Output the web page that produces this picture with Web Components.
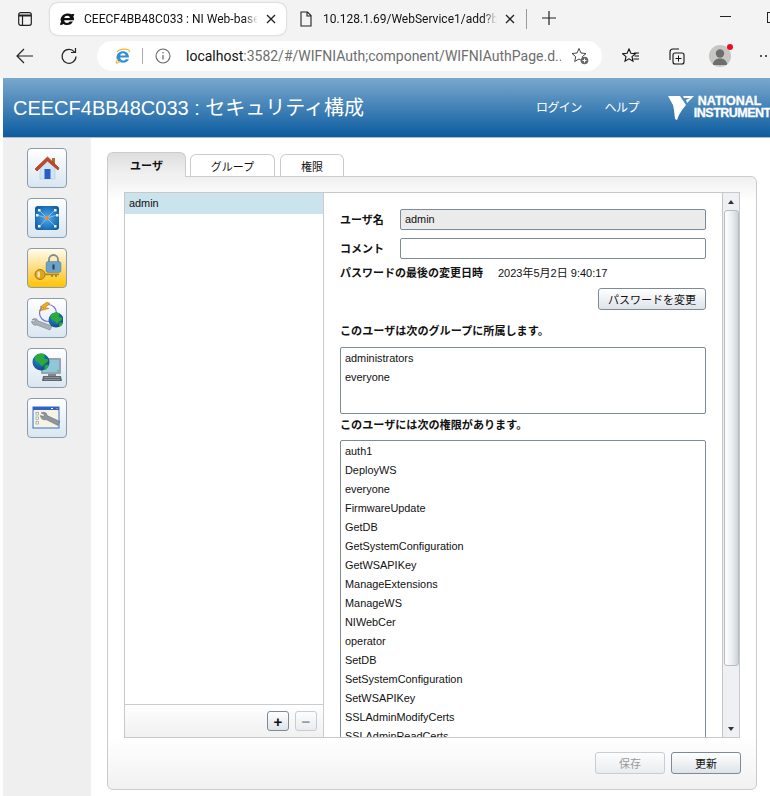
<!DOCTYPE html>
<html lang="ja">
<head>
<meta charset="utf-8">
<title>セキュリティ構成</title>
<style>
  html, body { margin: 0; padding: 0; height: 796px; overflow: hidden; background: #fff; }
  body { font-family: "Liberation Sans", "Noto Sans CJK JP", sans-serif; }
  app-page { display: block; }
</style>
</head>
<body>
<app-page></app-page>
<script>
// globe drawn at cx,cy with radius r, shared by two of the nav icons
const globe = (id, cx, cy, r) => `
  <defs><radialGradient id="${id}" cx=".4" cy=".35" r=".75"><stop offset="0" stop-color="#2f8fd0"/><stop offset="1" stop-color="#0a3f80"/></radialGradient></defs>
  <g transform="translate(${cx} ${cy}) scale(${r / 8})">
    <circle r="8" fill="url(#${id})"/>
    <path d="M-5-6c2-2 6-2.500 8-1.500 1.500 1-.5 2.500 0 4 1 1.500 3 0 3.500 1.500.5 2-2 2.500-3.500 4-1 1.500-2.500 2.500-3.500.5-.5-2-3-2.500-4.500-3.500-1-1.500-1-3.500 0-5z" fill="#2bab3a"/>
    <path d="M4 3c1.500-.5 3-.5 3.500 0-.5 2-2 3.500-3.500 4.500-1 0-1-3 0-4.500z" fill="#2bab3a"/>
  </g>`;

const ICONS = {
  home: `<svg width="30" height="30" viewBox="0 0 30 30"><path d="M8 13v13h15V13l-7.500-6z" fill="#cfe4f6" stroke="#a9c6de" stroke-width=".6"/><rect x="12.500" y="16" width="6" height="10" fill="#2a5cc0"/><rect x="20" y="5" width="3" height="6" fill="#a9712f"/><path d="M3 16 15.500 4 27 15l-1 2-10.500-9L5 18z" fill="#c04a26" stroke="#a83c1e" stroke-width=".8"/></svg>`,
  net: `<svg width="30" height="30" viewBox="0 0 30 30"><defs><radialGradient id="n" cx=".5" cy=".5" r=".7"><stop offset="0" stop-color="#58ace6"/><stop offset=".6" stop-color="#1f78c0"/><stop offset="1" stop-color="#0d4f8e"/></radialGradient></defs><rect x="3" y="3" width="24" height="24" rx="3" fill="url(#n)"/><path d="M7 7 15 15M23 7 15 15M8 23 15 15M23 23 15 15M5 12 15 15M25 12 15 15" stroke="#d8e9f6" stroke-width=".5"/><g fill="#eaf3fa"><rect x="4" y="11" width="2.500" height="2.500"/><rect x="24" y="11" width="2.500" height="2.500"/><rect x="6" y="6" width="2.500" height="2.500"/><rect x="22" y="6" width="2.500" height="2.500"/><rect x="6" y="22" width="2.500" height="2.500"/><rect x="22" y="22" width="2.500" height="2.500"/></g><circle cx="15" cy="15" r="2" fill="#f08a2c"/></svg>`,
  key: `<svg width="30" height="30" viewBox="0 0 30 30"><path d="M17 9V6.500a4.500 4.500 0 0 1 9 0V9" fill="none" stroke="#7f8a96" stroke-width="1.800"/><rect x="14" y="8.500" width="15" height="11" rx="2" fill="#6ba2c8" stroke="#4d7fa4" stroke-width=".5"/><rect x="20.500" y="11.500" width="2" height="5" fill="#24405c"/><circle cx="8" cy="21.500" r="5" fill="#e0a51e" stroke="#a87a10"/><rect x="5.500" y="18.500" width="2.500" height="6" rx="1" fill="#f3e6b8"/><path d="M13 20.500h14v1.800h-2v1.700h-2v-1.700h-2v1.700h-2v-1.700h-6z" fill="#b58810"/></svg>`,
  wrench: `<svg width="32" height="32" viewBox="0 0 32 32"><circle cx="17" cy="11" r="8.500" fill="none" stroke="#7474c4" stroke-width="1.200"/><path d="M16 0 9 5l4 1-5 3 10-2.500-4-1 5-4z" fill="#f2aa18" stroke="#a8720e" stroke-width=".5"/><path d="M1 18c2-2 5-2 6 1l14 5-2 4-13-5c-3 1-5-1-5.500-3.500l3 .5 1-2z" fill="#a9b0b8" stroke="#6a737c" stroke-width=".5"/>${globe('g1', 25, 18, 7.500)}</svg>`,
  monitor: `<svg width="32" height="32" viewBox="0 0 32 32"><rect x="10" y="6" width="20" height="16" rx="1" fill="#9aa3ab"/><rect x="12" y="8" width="16" height="12" fill="#8fc6dc"/><rect x="26" y="18" width="2" height="1.500" fill="#3dd060"/><rect x="17" y="22" width="8" height="2" fill="#80878e"/><path d="M12 24h18l1 5H11z" fill="#5f666d"/><path d="M13 25.500h16M13 27.500h16" stroke="#a8aeb4" stroke-width=".6"/>${globe('g2', 10, 10, 8.500)}</svg>`,
  window: `<svg width="32" height="32" viewBox="0 0 32 32"><rect x="2" y="5" width="26" height="21" fill="#f6f3e4" stroke="#3a6dc4"/><rect x="2" y="5" width="26" height="3" fill="#2f62c8"/><rect x="20" y="6" width="2" height="1" fill="#fff"/><rect x="25" y="6" width="2" height="1" fill="#f07828"/><g fill="#fff" stroke="#8a9a9a" stroke-width=".7"><rect x="5" y="10.500" width="2.500" height="2.500"/><rect x="5" y="15" width="2.500" height="2.500"/><rect x="5" y="19.500" width="2.500" height="2.500"/></g><path d="M10 11c3-1.500 6-.5 6 2.500l13 6-2 4-12-6c-3 1-5.500-1-5.500-4l3 1 1-2z" fill="#8e959c" stroke="#5c646c" stroke-width=".5"/></svg>`
};

class BrowserBar extends HTMLElement {
  constructor() {
    super();
    this.attachShadow({mode: 'open'}).innerHTML = `
    <style>
      :host { display: block; height: 78px; background: #f3f3f3; color: #111; overflow: hidden;
        font: 12px Roboto, "Noto Sans", "Noto Sans CJK JP", sans-serif; }
      svg { display: block; flex: none; }
      .tabs { height: 37px; display: flex; align-items: flex-start; }
      .panel { width: 50px; height: 37px; flex: none; display: flex; align-items: center; justify-content: center; box-sizing: border-box; padding-left: 0; }
      .tab { display: flex; align-items: center; flex: none; height: 32px; margin-top: 3px; box-sizing: border-box; white-space: nowrap; }
      .tab.on { width: 236px; background: #fff; border-radius: 8px; box-shadow: 0 0 2px #0000004d; padding-left: 9px; }
      .tab.off { width: 236px; padding-left: 14px; }
      .name { overflow: hidden; width: 174px; -webkit-mask-image: linear-gradient(90deg, #000 92%, transparent); mask-image: linear-gradient(90deg, #000 92%, transparent); }
      .on .name { margin-left: 9px; }
      .off .name { margin-left: 11px; }
      .x { margin-left: 8px; }
      .sep { width: 1px; height: 20px; flex: none; background: #9a9a9a; margin: 9px 15px 0 4px; }
      .plus { margin-top: 11px; }
      .min { margin: 16px 0 0 164px; width: 11px; height: 1px; flex: none; background: #222; }
      .max { margin: 12px 0 0 36px; width: 10px; height: 9px; flex: none; border: 1px solid #222; }
      .tools { height: 38px; display: flex; align-items: center; }
      .nav { width: 97px; flex: none; display: flex; align-items: center; padding-left: 16px; gap: 26px; box-sizing: border-box; }
      .addr { width: 505px; flex: none; height: 30px; background: #fff; border-radius: 15px; display: flex; align-items: center; padding-left: 18px; box-sizing: border-box; font-size: 14px; white-space: nowrap; }
      .bar { width: 1px; height: 16px; flex: none; background: #aaa; margin: 0 12px 0 11px; }
      .url { margin-left: 15px; width: 375px; flex: none; overflow: hidden; color: #6e6e6e; }
      .url b { font-weight: 400; color: #111; }
      .star { margin-left: 10px; }
      .right { display: flex; align-items: center; margin-left: 20px; }
      .avatar { width: 22px; height: 22px; border-radius: 50%; background: #c8c6c4; overflow: hidden; }
      .wrap { position: relative; margin-left: 24px; }
      .dot { position: absolute; right: -2px; top: -1px; width: 6px; height: 6px; border-radius: 50%; background: #e81123; }
      .dots { margin-left: 29px; display: flex; gap: 3px; }
      .dots i { width: 2px; height: 2px; background: #222; border-radius: 50%; }
    </style>
    <div class="tabs">
      <div class="panel"><svg width="14" height="14" viewBox="0 0 14 14"><rect x=".7" y=".7" width="12.6" height="12.6" rx="2" fill="none" stroke="#222" stroke-width="1.2"/><path d="M1 3.5h12" stroke="#222" stroke-width="2"/><path d="M4.5 3.5v9.5" stroke="#222" stroke-width="1.2"/></svg></div>
      <div class="tab on">
        <svg width="16" height="16" viewBox="0 0 16 16"><path d="M1.5 9.5C1.5 5 5 2.4 9 2.4c1.5 0 2.7.3 3.600.9 1-.4 2-.5 2.400-.2.400.3.100 1.400-.7 2.500.6 1 .8 2.200.7 3.600H5.200c.1 1.800 1.300 2.700 2.900 2.700 1.200 0 2.100-.5 2.600-1.400h3.200c-.9 2.400-3 3.600-5.800 3.600-1.500 0-2.800-.4-3.700-1.100-1.300 1-2.600 1.300-3 .9-.5-.5-.1-1.800.7-3.200-.2-.6-.3-1.100-.4-1.700zM5.300 7h5.600c-.1-1.500-1.200-2.300-2.700-2.300S5.500 5.500 5.300 7z" fill="#111"/></svg>
        <div class="name">CEECF4BB48C033 : NI Web-based Configuration</div>
        <svg class="x" width="10" height="10" viewBox="0 0 10 10"><path d="M1 1l8 8M9 1l-8 8" stroke="#222" stroke-width="1.300"/></svg>
      </div>
      <div class="tab off">
        <svg width="12" height="16" viewBox="0 0 12 16"><path d="M1 1h6.500L11 4.500V15H1zM7 1v4h4" fill="none" stroke="#222" stroke-width="1.100"/></svg>
        <div class="name">10.128.1.69/WebService1/add?b=1</div>
        <svg class="x" width="10" height="10" viewBox="0 0 10 10"><path d="M1 1l8 8M9 1l-8 8" stroke="#222" stroke-width="1.300"/></svg>
      </div>
      <div class="sep"></div>
      <svg class="plus" width="14" height="14" viewBox="0 0 14 14"><path d="M7 0v14M0 7h14" stroke="#222" stroke-width="1.200"/></svg>
      <div class="min"></div>
      <div class="max"></div>
    </div>
    <div class="tools">
      <div class="nav">
        <svg width="18" height="16" viewBox="0 0 18 16"><path d="M8 1 1 8l7 7M1 8h16" fill="none" stroke="#222" stroke-width="1.200"/></svg>
        <svg width="18" height="18" viewBox="0 0 18 18"><path d="M14.500 5A7 7 0 1 0 16 9.500M15.500 1v4.500H11" fill="none" stroke="#222" stroke-width="1.200"/></svg>
      </div>
      <div class="addr">
        <svg width="16" height="16" viewBox="0 0 16 16"><path d="M2 3.800C4 1.200 9 .5 13 1.500c1.500.5 1.800 1.500.7 3" fill="none" stroke="#f0b429" stroke-width="1.200"/><path d="M1.500 9.500C1.500 5.500 4.500 3.200 8 3.200c3.500 0 6 2.300 6 6.300H5.200c.2 2 1.400 3 3 3 1.200 0 2-.5 2.500-1.300h3.200c-.9 2.300-3 3.500-5.700 3.500-3.600 0-6.700-2-6.700-5.200zM5.300 7.600h5.200C10.400 6 9.400 5.200 8 5.200S5.500 6 5.300 7.600z" fill="#2f8fd8"/><path d="M3 11c-1.500 2-2.200 3.600-1.500 4 .7.400 2.300-.5 3.800-1.800" fill="none" stroke="#f0b429" stroke-width="1.100"/></svg>
        <div class="bar"></div>
        <svg width="16" height="16" viewBox="0 0 16 16"><circle cx="8" cy="8" r="7" fill="none" stroke="#666" stroke-width="1.100"/><path d="M8 7v4.500" stroke="#666" stroke-width="1.200"/><circle cx="8" cy="4.800" r=".8" fill="#666"/></svg>
        <div class="url"><b>localhost</b>:3582/#/WIFNIAuth;component/WIFNIAuthPage.d...</div>
        <svg class="star" width="18" height="18" viewBox="0 0 18 18"><path d="M8 1.500l2 4.500 5 .5-3.700 3.200 1 4.800L8 12l-4.300 2.500 1-4.800L1 6.500 6 6z" fill="none" stroke="#444" stroke-width="1"/><circle cx="13.500" cy="13.500" r="3.800" fill="#666"/><path d="M13.500 11.500v4M11.500 13.500h4" stroke="#fff"/></svg>
      </div>
      <div class="right">
        <svg width="18" height="16" viewBox="0 0 18 16"><path d="M7 1l1.900 4.300 4.600.4-3.500 3 1 4.500L7 10.800 3 13.200l1-4.500-3.500-3 4.600-.4z" fill="none" stroke="#111" stroke-width="1.100"/><path d="M12 5h5M12.500 8h4.500M11.500 11h5.500" stroke="#111"/></svg>
        <svg style="margin-left:27px" width="18" height="18" viewBox="0 0 18 18"><path d="M3 13V5a3 3 0 0 1 3-3h6" fill="none" stroke="#111" stroke-width="1.100"/><rect x="6" y="6" width="11" height="11" rx="2" fill="none" stroke="#111" stroke-width="1.100"/><path d="M11.500 8.500v6M8.500 11.500h6" stroke="#111"/></svg>
        <div class="wrap"><div class="avatar"><svg width="22" height="22" viewBox="0 0 22 22"><circle cx="11" cy="8.500" r="4.200" fill="#6e6e6e"/><path d="M3.500 20c1-5 4-6.500 7.500-6.500s6.500 1.500 7.500 6.500z" fill="#6e6e6e"/></svg></div><div class="dot"></div></div>
        <div class="dots"><i></i><i></i><i></i></div>
      </div>
    </div>`;
  }
}
customElements.define('browser-bar', BrowserBar);

class AppHeader extends HTMLElement {
  constructor() {
    super();
    this.attachShadow({mode: 'open'}).innerHTML = `
    <style>
      :host { display: flex; align-items: center; height: 59px; margin-left: 3px; color: #fff; overflow: hidden; white-space: nowrap;
        background: linear-gradient(#7aa8cd, #0b5ca0); border-bottom: 1px solid #b9b9b9; }
      h1 { margin: 0 0 0 10px; padding-bottom: 3px; font: 400 20px "Liberation Sans", "Noto Sans CJK JP", sans-serif; width: 523px; flex: none; }
      a { font-size: 12px; letter-spacing: -.6px; padding-bottom: 2px; flex: none; }
      .help { margin-left: 23px; }
      .logo { margin-left: 28px; display: flex; align-items: flex-start; flex: none; padding-top: 3px; }
      .logo div { font: 700 12.5px/12px "Liberation Sans", sans-serif; -webkit-text-stroke: .3px #fff; margin-top: 0; }
      .logo span { display: block; }
      .logo .a { margin-left: 4px; }
      .logo .b { letter-spacing: -.5px; }
    </style>
    <h1><slot></slot></h1>
    <a>ログイン</a><a class="help">ヘルプ</a>
    <div class="logo">
      <svg width="27" height="28" viewBox="0 0 27 28" style="flex:none"><path d="M1 1h12l6 9-4 5-3 5-2 5-2-1-1-9-1-5z" fill="#fff"/><path d="M16 1h11l-7 7-1-3 4-2h-6z" fill="#fff"/></svg>
      <div><span class="a">NATIONAL</span><span class="b">INSTRUMENTS</span></div>
    </div>`;
  }
}
customElements.define('app-header', AppHeader);

class NavButton extends HTMLElement {
  constructor() {
    super();
    const active = this.hasAttribute('active');
    this.attachShadow({mode: 'open'}).innerHTML = `
    <style>
      :host { display: flex; align-items: center; justify-content: center; width: 40px; height: 40px; box-sizing: border-box;
        border: 1px solid #8c9cac; border-radius: 4px;
        background: ${active ? 'linear-gradient(#fffdf0, #ffd35c 65%, #ffc400)' : 'linear-gradient(#fff, #d9e6f1)'}; }
    </style>
    ${ICONS[this.getAttribute('icon')]}`;
  }
}
customElements.define('nav-button', NavButton);

class SideNav extends HTMLElement {
  constructor() {
    super();
    this.attachShadow({mode: 'open'}).innerHTML = `
    <style>
      :host { display: flex; flex-direction: column; gap: 10px; align-items: center; flex: none; width: 88px; margin-left: 3px; padding-top: 10px; box-sizing: border-box; background: #efefef; }
    </style>
    <slot></slot>`;
  }
}
customElements.define('side-nav', SideNav);

class UiButton extends HTMLElement {
  constructor() {
    super();
    this.attachShadow({mode: 'open'}).innerHTML = `
    <style>
      :host { display: flex; align-items: center; justify-content: center; box-sizing: border-box; height: 22px; flex: none;
        border: 1px solid #7d8b99; border-radius: 3px; background: linear-gradient(#fff, #dfe3e8); color: #111; font-size: 11px; }
      :host([disabled]) { border-color: #c6cdd3; color: #999; background: linear-gradient(#fdfdfd, #e9ecef); }
    </style>
    <slot></slot>`;
  }
}
customElements.define('ui-button', UiButton);

class ListBox extends HTMLElement {
  constructor() {
    super();
    const rows = (this.getAttribute('items') || '').split(',').map(t => `<div>${t}</div>`).join('');
    this.attachShadow({mode: 'open'}).innerHTML = `
    <style>
      :host { display: block; box-sizing: border-box; border: 1px solid #7d8b99; border-radius: 2px; padding: 1px 0 0 4px; background: #fff; overflow: hidden; flex: none; font-size: 10.9px; }
      div { height: 19px; line-height: 19px; white-space: nowrap; color: #111; }
    </style>
    ${rows}`;
  }
}
customElements.define('list-box', ListBox);

class UserPanel extends HTMLElement {
  constructor() {
    super();
    this.attachShadow({mode: 'open'}).innerHTML = `
    <style>
      :host { display: flex; flex-direction: column; flex: 1; min-width: 0; height: 100%; box-sizing: border-box; padding: 16px 16px 0 16px; overflow: hidden; color: #111; font-size: 11px; border-left: 1px solid #ccc; }
      .row { display: flex; align-items: center; height: 21px; margin-bottom: 8px; }
      .label { font-weight: 700; width: 60px; flex: none; font-size: 11px; margin-top: -2px; }
      .field { flex: 1; height: 21px; box-sizing: border-box; border: 1px solid #7d8b99; border-radius: 2px; padding-left: 4px; line-height: 19px; background: #fff; font-size: 10.9px; }
      .field.ro { background: #ebebeb; }
      .date { display: flex; height: 14px; align-items: center; margin-top: -1px; }
      .date b { font-size: 11px; }
      .date span { margin-left: 15px; font-size: 11px; }
      .act { display: flex; justify-content: flex-end; margin-top: 9px; }
      h4 { margin: 14px 0 9px; font-size: 11.1px; line-height: 14px; font-weight: 700; }
      h4.second { margin: 4px 0 8px; }
    </style>
    <div class="row"><div class="label">ユーザ名</div><div class="field ro">admin</div></div>
    <div class="row" style="margin-bottom:7px"><div class="label">コメント</div><div class="field"></div></div>
    <div class="date"><b>パスワードの最後の変更日時</b><span>2023年5月2日 9:40:17</span></div>
    <div class="act"><ui-button style="width:108px">パスワードを変更</ui-button></div>
    <h4>このユーザは次のグループに所属します。</h4>
    <slot name="groups"></slot>
    <h4 class="second">このユーザには次の権限があります。</h4>
    <slot name="rights"></slot>`;
  }
}
customElements.define('user-panel', UserPanel);

class ScrollTrack extends HTMLElement {
  constructor() {
    super();
    this.attachShadow({mode: 'open'}).innerHTML = `
    <style>
      :host { display: flex; flex-direction: column; align-items: center; width: 17px; flex: none; box-sizing: border-box; height: 100%; background: #eef0f3; border-left: 1px solid #c4c4c4; }
      .arrow { height: 17px; flex: none; width: 100%; display: flex; align-items: center; justify-content: center; }
      .thumb { width: 15px; height: 456px; flex: none; box-sizing: border-box; border: 1px solid #b5bcc4; border-radius: 3px; background: linear-gradient(90deg, #fff, #e8ebee 60%, #cdd2d8); }
      .fill { flex: 1; }
      i { width: 0; height: 0; border-left: 3.5px solid transparent; border-right: 3.5px solid transparent; }
      .up i { border-bottom: 4px solid #333; }
      .down i { border-top: 4px solid #333; }
    </style>
    <div class="arrow up"><i></i></div>
    <div class="thumb"></div>
    <div class="fill"></div>
    <div class="arrow down"><i></i></div>`;
  }
}
customElements.define('scroll-track', ScrollTrack);

class TabView extends HTMLElement {
  constructor() {
    super();
    this.attachShadow({mode: 'open'}).innerHTML = `
    <style>
      :host { display: block; width: 650px; flex: none; font-size: 11px; color: #111; }
      .tabs { display: flex; align-items: flex-end; height: 24px; gap: 4px; position: relative; z-index: 1; }
      .tab { box-sizing: border-box; height: 22px; border: 1px solid #ccc; border-bottom: 0; border-radius: 6px 6px 0 0; background: #fff; display: flex; align-items: center; justify-content: center; }
      .tab.on { height: 25px; margin-bottom: -1px; font-weight: 700; background: linear-gradient(#dedede, #f2f2f2); }
      .box { box-sizing: border-box; height: 614px; border: 1px solid #ccc; border-radius: 0 6px 6px 6px; padding: 15px 16px 0; background: linear-gradient(#f0f0f0, #fff 24px, #fff 560px, #f1f1f1); }
      .frame { display: flex; height: 546px; box-sizing: border-box; border: 1px solid #c8c8c8; background: #fff; }
      .foot { display: flex; justify-content: flex-end; gap: 6px; margin: 14px -1px 0 0; }
    </style>
    <div class="tabs">
      <div class="tab on" style="width:79px">ユーザ</div>
      <div class="tab" style="width:85px;margin-right:1px">グループ</div>
      <div class="tab" style="width:64px">権限</div>
    </div>
    <div class="box">
      <div class="frame"><slot></slot></div>
      <div class="foot"><ui-button disabled style="width:70px">保存</ui-button><ui-button style="width:70px">更新</ui-button></div>
    </div>`;
  }
}
customElements.define('tab-view', TabView);

class UserList extends HTMLElement {
  constructor() {
    super();
    this.attachShadow({mode: 'open'}).innerHTML = `
    <style>
      :host { display: flex; flex-direction: column; width: 198px; flex: none; height: 100%; font-size: 10px; color: #111; }
      .item { height: 21px; line-height: 20px; padding-left: 4px; background: #cae3ed; font-size: 10.9px; }
      .space { flex: 1; }
      .foot { height: 33px; box-sizing: border-box; border-top: 1px solid #ccc; background: linear-gradient(#fff, #f0f0f0); display: flex; justify-content: flex-end; align-items: center; gap: 6px; padding: 0 6px 0 0; }
      ui-button { width: 22px; height: 20px; font-size: 15px; font-weight: 700; }
    </style>
    <div class="item">admin</div>
    <div class="space"></div>
    <div class="foot"><ui-button>+</ui-button><ui-button disabled>−</ui-button></div>`;
  }
}
customElements.define('user-list', UserList);

class AppPage extends HTMLElement {
  constructor() {
    super();
    this.attachShadow({mode: 'open'}).innerHTML = `
    <style>
      :host { display: block; }
      .main { display: flex; height: 658px; }
      .content { flex: 1; padding: 14px 0 0 16px; min-width: 0; }
      list-box[slot=groups] { height: 67px; }
      list-box[slot=rights] { height: 321px; }
    </style>
    <browser-bar></browser-bar>
    <app-header>CEECF4BB48C033 : セキュリティ構成</app-header>
    <div class="main">
      <side-nav>
        <nav-button icon="home"></nav-button>
        <nav-button icon="net"></nav-button>
        <nav-button icon="key" active></nav-button>
        <nav-button icon="wrench"></nav-button>
        <nav-button icon="monitor"></nav-button>
        <nav-button icon="window"></nav-button>
      </side-nav>
      <div class="content">
        <tab-view>
          <user-list></user-list>
          <user-panel>
            <list-box slot="groups" items="administrators,everyone"></list-box>
            <list-box slot="rights" items="auth1,DeployWS,everyone,FirmwareUpdate,GetDB,GetSystemConfiguration,GetWSAPIKey,ManageExtensions,ManageWS,NIWebCer,operator,SetDB,SetSystemConfiguration,SetWSAPIKey,SSLAdminModifyCerts,SSLAdminReadCerts"></list-box>
          </user-panel>
          <scroll-track></scroll-track>
        </tab-view>
      </div>
    </div>`;
  }
}
customElements.define('app-page', AppPage);
</script>
</body>
</html>
